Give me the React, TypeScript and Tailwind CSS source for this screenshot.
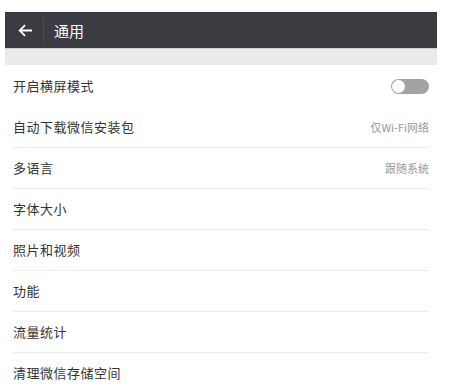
import React from 'react'

type Row = { label: string; value?: string; toggle?: boolean }

const rows: Row[] = [
  { label: '开启横屏模式', toggle: true },
  { label: '自动下载微信安装包', value: '仅Wi-Fi网络' },
  { label: '多语言', value: '跟随系统' },
  { label: '字体大小' },
  { label: '照片和视频' },
  { label: '功能' },
  { label: '流量统计' },
  { label: '清理微信存储空间' },
]

function Toggle() {
  return (
    <div className="flex h-[15px] w-[38px] items-center rounded-full bg-[#a3a3a3] px-[1px]">
      <div className="h-[13px] w-[13px] rounded-full bg-white" />
    </div>
  )
}

export default function App() {
  return (
    <div
      className="ml-[5px] mt-[12px] w-[432px] bg-white"
      style={{ fontFamily: '"Noto Sans CJK SC", "Noto Sans", sans-serif' }}
    >
      {/* Header */}
      <div className="flex h-[36px] items-center bg-[#3b3c41]">
        <div className="flex w-[38px] items-center justify-center pl-[2px]">
          <svg width="15" height="13" viewBox="0 0 15 13" fill="none">
            <path d="M14 6.5H2M7 1.2L1.7 6.5 7 11.8" stroke="#ffffff" strokeWidth="1.8" />
          </svg>
        </div>
        <div className="h-[26px] w-px bg-[#4b4c52]" />
        <span className="ml-[10px] text-[15px] leading-none text-white">通用</span>
      </div>

      {/* Spacer band */}
      <div className="h-[17px] border-t border-[#cfcfcf] bg-[#ebebeb]" />

      {/* List */}
      <div className="px-[8px]">
        {rows.map((row, i) => (
          <div
            key={row.label}
            className={`flex h-[41px] items-center justify-between border-t ${
              i > 1 ? 'border-[#ececec]' : 'border-transparent'
            }`}
          >
            <span className="text-[13px] tracking-[0.5px] text-[#333333]">{row.label}</span>
            {row.toggle && <Toggle />}
            {row.value && <span className="text-[11px] text-[#9a9a9a]">{row.value}</span>}
          </div>
        ))}
      </div>
    </div>
  )
}
